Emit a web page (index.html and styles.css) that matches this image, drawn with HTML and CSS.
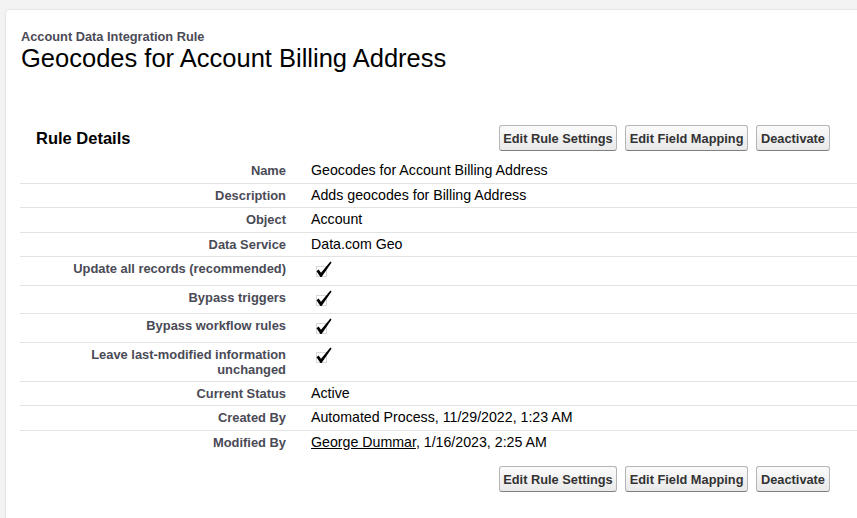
FILE: index.html
```html
<!DOCTYPE html>
<html>
<head>
<meta charset="utf-8">
<link rel="stylesheet" href="styles.css">
</head>
<body>
<div class="card">
  <div class="page-head">
    <div class="subtitle">Account Data Integration Rule</div>
    <h1 class="title">Geocodes for Account Billing Address</h1>
  </div>
  <div class="section">
    <div class="section-head">
      <h2 class="section-title">Rule Details</h2>
      <div class="btns">
        <button class="btn">Edit Rule Settings</button>
        <button class="btn">Edit Field Mapping</button>
        <button class="btn">Deactivate</button>
      </div>
    </div>
    <table class="details">
      <tr><th>Name</th><td>Geocodes for Account Billing Address</td></tr>
      <tr><th>Description</th><td>Adds geocodes for Billing Address</td></tr>
      <tr><th>Object</th><td>Account</td></tr>
      <tr><th>Data Service</th><td>Data.com Geo</td></tr>
      <tr class="cb"><th>Update all records (recommended)</th><td><svg class="check" viewBox="0 0 20 20" width="20" height="20"><rect x="2.5" y="7.5" width="10" height="10" fill="none" stroke="#b0b0b0" stroke-width="1" stroke-dasharray="1 1"/><path d="M2.5 12.2 L4.6 10.6 L7 13.8 L16.4 2.4 L17.6 3.4 L7.6 18 L6.4 18 Z" fill="#000"/></svg></td></tr>
      <tr class="cb"><th>Bypass triggers</th><td><svg class="check" viewBox="0 0 20 20" width="20" height="20"><rect x="2.5" y="7.5" width="10" height="10" fill="none" stroke="#b0b0b0" stroke-width="1" stroke-dasharray="1 1"/><path d="M2.5 12.2 L4.6 10.6 L7 13.8 L16.4 2.4 L17.6 3.4 L7.6 18 L6.4 18 Z" fill="#000"/></svg></td></tr>
      <tr class="cb"><th>Bypass workflow rules</th><td><svg class="check" viewBox="0 0 20 20" width="20" height="20"><rect x="2.5" y="7.5" width="10" height="10" fill="none" stroke="#b0b0b0" stroke-width="1" stroke-dasharray="1 1"/><path d="M2.5 12.2 L4.6 10.6 L7 13.8 L16.4 2.4 L17.6 3.4 L7.6 18 L6.4 18 Z" fill="#000"/></svg></td></tr>
      <tr class="cb two"><th>Leave last-modified information<br>unchanged</th><td><svg class="check" viewBox="0 0 20 20" width="20" height="20"><rect x="2.5" y="7.5" width="10" height="10" fill="none" stroke="#b0b0b0" stroke-width="1" stroke-dasharray="1 1"/><path d="M2.5 12.2 L4.6 10.6 L7 13.8 L16.4 2.4 L17.6 3.4 L7.6 18 L6.4 18 Z" fill="#000"/></svg></td></tr>
      <tr><th>Current Status</th><td>Active</td></tr>
      <tr><th>Created By</th><td>Automated Process, 11/29/2022, 1:23 AM</td></tr>
      <tr class="last"><th>Modified By</th><td><a class="user" href="#">George Dummar</a>, 1/16/2023, 2:25 AM</td></tr>
    </table>
    <div class="section-foot">
      <div class="btns">
        <button class="btn">Edit Rule Settings</button>
        <button class="btn">Edit Field Mapping</button>
        <button class="btn">Deactivate</button>
      </div>
    </div>
  </div>
</div>
</body>
</html>
```

FILE: styles.css
```css
html, body {
  margin: 0;
  padding: 0;
  background: #f3f3f3;
  overflow: hidden;
  font-family: Arial, "Liberation Sans", sans-serif;
}
.card {
  margin: 9px -40px 0 5px;
  background: #fff;
  border: 1px solid #e6e6e6;
  border-radius: 4px;
  height: 560px;
}
.page-head {
  padding: 19px 0 0 15px;
}
.subtitle {
  font-size: 12.8px;
  font-weight: bold;
  color: #4a4a56;
  line-height: 16px;
}
.title {
  margin: 0;
  font-size: 25.5px;
  font-weight: normal;
  color: #000;
  line-height: 26px;
}
.section {
  margin: 0 0 0 14px;
}
.section-head {
  display: flex;
  align-items: center;
  justify-content: space-between;
  width: 810px;
  margin-top: 54px;
  padding: 0 0 8px 16px;
  box-sizing: border-box;
}
.section-title {
  margin: 0;
  font-size: 16.5px;
  font-weight: bold;
  color: #000;
}
.btns {
  display: flex;
  gap: 8px;
}
.btn {
  font-family: Arial, "Liberation Sans", sans-serif;
  font-size: 12.8px;
  font-weight: bold;
  color: #333;
  height: 26px;
  padding: 0 3.5px;
  background: linear-gradient(#fbfbfb, #e9e9e9);
  border: 1px solid #b5b5b5;
  border-bottom-color: #7f7f7f;
  border-radius: 3px;
  margin: 0;
}
.btn:last-child {
  padding: 0 4px;
}
.details {
  border-collapse: collapse;
  width: 880px;
}
.details th, .details td {
  border-bottom: 1px solid #e3e3e3;
  padding: 4px 0 4px;
  vertical-align: top;
  line-height: 15.5px;
}
.details th {
  width: 266px;
  padding-right: 10px;
  text-align: right;
  font-size: 12.9px;
  font-weight: bold;
  color: #4a4a56;
}
.details td {
  padding-left: 15px;
  font-size: 14.2px;
  color: #000;
}
.details tr.cb th {
  padding-bottom: 8px;
}
.details tr.cb td {
  padding-top: 2px;
  padding-bottom: 2px;
}
.details tr.two th {
  line-height: 15px;
  padding-bottom: 4px;
}
.details tr.last th, .details tr.last td {
  border-bottom: none;
}
.check {
  display: block;
  margin: 0 0 0 3px;
}
.user {
  color: #000;
  text-decoration: underline;
}
.section-foot {
  display: flex;
  justify-content: flex-end;
  width: 810px;
  margin-top: 12px;
}
```
